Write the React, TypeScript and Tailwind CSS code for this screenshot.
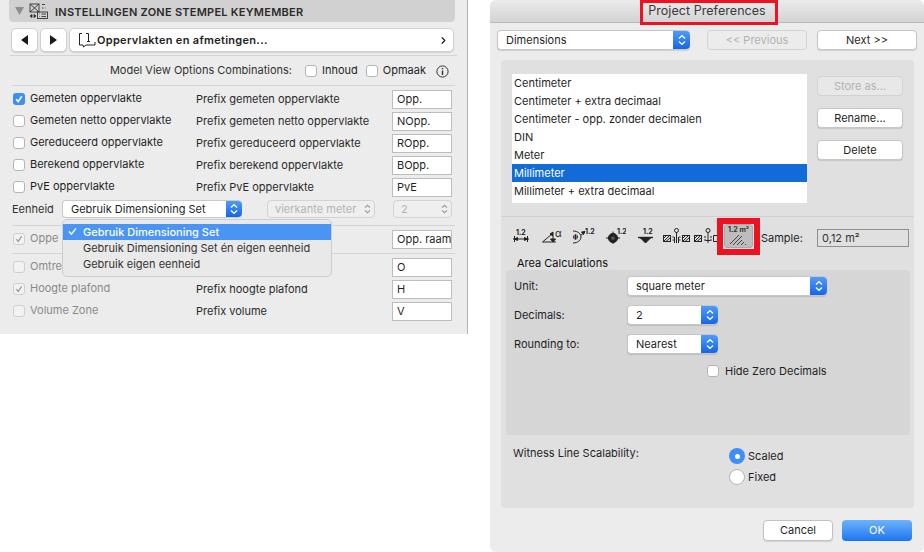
import { ChevronRight } from 'lucide-react';

// Left palette rows
const ROWS_TOP = [
  { label: 'Gemeten oppervlakte', prefix: 'Prefix gemeten oppervlakte', value: 'Opp.', checked: true },
  { label: 'Gemeten netto oppervlakte', prefix: 'Prefix gemeten netto oppervlakte', value: 'NOpp.', checked: false },
  { label: 'Gereduceerd oppervlakte', prefix: 'Prefix gereduceerd oppervlakte', value: 'ROpp.', checked: false },
  { label: 'Berekend oppervlakte', prefix: 'Prefix berekend oppervlakte', value: 'BOpp.', checked: false },
  { label: 'PvE oppervlakte', prefix: 'Prefix PvE oppervlakte', value: 'PvE', checked: false },
];

const LIST_ITEMS = [
  'Centimeter',
  'Centimeter + extra decimaal',
  'Centimeter - opp. zonder decimalen',
  'DIN',
  'Meter',
  'Millimeter',
  'Millimeter + extra decimaal',
];

function Check({ checked = false, dim = false }: { checked?: boolean; dim?: boolean }) {
  if (checked && !dim) {
    return (
      <span className="w-3 h-3 shrink-0 rounded-[3px] bg-[#3d8ef5] flex items-center justify-center">
        <svg width="10" height="10" viewBox="0 0 10 10" fill="none" stroke="#fff" strokeWidth="1.6">
          <path d="M2.2 5.2 L4.2 7.6 L7.8 2.2" />
        </svg>
      </span>
    );
  }
  return (
    <span
      className={`w-3 h-3 shrink-0 rounded-[3px] border flex items-center justify-center ${
        dim ? 'bg-[#f2f2f2] border-[#cfcfcf]' : 'bg-white border-[#b5b5b5]'
      }`}
    >
      {checked && (
        <svg width="10" height="10" viewBox="0 0 10 10" fill="none" stroke="#9a9a9a" strokeWidth="1.2">
          <path d="M2.4 5.2 L4.2 7.4 L7.6 2.4" />
        </svg>
      )}
    </span>
  );
}

function Updown({ color = '#fff', w = 8, h = 12 }: { color?: string; w?: number; h?: number }) {
  return (
    <svg width={w} height={h} viewBox="0 0 8 12" fill="none" stroke={color} strokeWidth="1.4">
      <path d="M1 4.4 L4 1.6 L7 4.4" />
      <path d="M1 7.6 L4 10.4 L7 7.6" />
    </svg>
  );
}

function BlueCap({ className = 'w-4' }: { className?: string }) {
  return (
    <span className={`${className} self-stretch shrink-0 rounded-r-[4px] bg-gradient-to-b from-[#4f9bf8] to-[#1466e6] flex items-center justify-center`}>
      <Updown />
    </span>
  );
}

function PrefixRow({
  label,
  prefix,
  value,
  checked,
  dim,
}: {
  label: string;
  prefix: string;
  value: string;
  checked?: boolean;
  dim?: boolean;
}) {
  return (
    <div className="h-[22px] flex items-center">
      <div className="w-[196px] flex items-center pl-[13px] gap-[5px]">
        <Check checked={checked} dim={dim} />
        <span className={`-mt-[2px] ${dim ? 'text-[#8a8a8a]' : 'text-[#1f1f1f]'}`}>{label}</span>
      </div>
      <span className="flex-1 text-[#2a2a2a]">{prefix}</span>
      <span className="w-[60px] h-[19px] mr-[15px] border border-[#bdbdbd] bg-white pl-[4px] flex items-center text-[#1f1f1f] whitespace-nowrap overflow-hidden">
        {value}
      </span>
    </div>
  );
}

function LeftPanel() {
  return (
    <div className="w-[468px] h-[334px] shrink-0 bg-[#ececec] border-r border-[#b4b4b4] relative text-[11px] font-['Inter',sans-serif]">
      {/* Header */}
      <div className="mx-[9px] w-[446px] h-[22px] bg-[#d1d1d1] rounded-b-[4px] flex items-center pl-[6px]">
        <svg width="9" height="8" viewBox="0 0 9 8" className="mr-[5px]">
          <path d="M0 0 H9 L4.5 8 Z" fill="#8d8d8d" />
        </svg>
        <svg width="19" height="16" viewBox="0 0 19 16" fill="none" stroke="#333" strokeWidth="0.9" className="mr-[7px]">
          <rect x="1" y="1" width="9" height="8" />
          <path d="M1 1 L10 9 M10 1 L1 9" />
          <path d="M13 1.5 H16 M13 5 H14.5 M16.5 5 H17" />
          <rect x="8.5" y="9" width="10" height="6.5" />
          <path d="M10.5 11 H11 M12.5 11 H17 M10.5 13.5 H11 M12.5 13.5 H17" />
          <path d="M1 13 L3 11.5 V14.5 Z M7 13 L5 11.5 V14.5 Z" fill="#333" />
        </svg>
        <span className="pt-[2px] font-semibold text-[11px] text-[#2b2b2b] tracking-[0.25px]">INSTELLINGEN ZONE STEMPEL KEYMEMBER</span>
      </div>

      {/* Nav */}
      <div className="mt-[6px] ml-[11px] h-[24px] flex gap-[2px]">
        <button className="w-[27px] rounded-[5px] bg-white border border-[#cfcfcf] shadow-[0_1px_1px_rgba(0,0,0,0.12)] flex items-center justify-center">
          <svg width="7" height="10" viewBox="0 0 7 10"><path d="M7 0 V10 L0 5 Z" fill="#1a1a1a" /></svg>
        </button>
        <button className="w-[27px] rounded-[5px] bg-white border border-[#cfcfcf] shadow-[0_1px_1px_rgba(0,0,0,0.12)] flex items-center justify-center">
          <svg width="7" height="10" viewBox="0 0 7 10"><path d="M0 0 V10 L7 5 Z" fill="#1a1a1a" /></svg>
        </button>
        <button className="w-[385px] rounded-[5px] bg-white border border-[#cfcfcf] shadow-[0_1px_1px_rgba(0,0,0,0.12)] flex items-center pl-[8px] pr-[4px]">
          <svg width="18" height="16" viewBox="0 0 18 16" fill="none" stroke="#222" strokeWidth="1">
            <path d="M4 1.5 H1.5 V13 H5 L5.5 15 L8 13 H17 V10" />
            <path d="M8 1.5 H10.5 V9.5 M9 9.5 H12" />
          </svg>
          <span className="ml-[1px] font-semibold text-[#222] tracking-[0.3px]">Oppervlakten en afmetingen...</span>
          <ChevronRight size={11} strokeWidth={2.6} className="ml-auto text-[#222]" />
        </button>
      </div>

      <div className="mt-[3px] mx-[10px] border-t border-[#d4d4d4]" />

      {/* Model view */}
      <div className="h-[29px] flex items-center justify-end pr-[41px]">
        <span className="text-[#333] mr-[13px]">Model View Options Combinations:</span>
        <Check />
        <span className="ml-[5px] mr-[8px] text-[#1f1f1f]">Inhoud</span>
        <Check />
        <span className="ml-[5px] text-[#1f1f1f]">Opmaak</span>
      </div>
      <svg width="13" height="13" viewBox="0 0 13 13" fill="none" className="absolute left-[436px] top-[65px]">
        <circle cx="6.5" cy="6.5" r="5.6" stroke="#333" strokeWidth="1" />
        <path d="M6.5 5.6 V10 M6.5 3 V4.2" stroke="#333" strokeWidth="1.4" />
      </svg>
      <div className="mx-[12px] border-t border-[#d4d4d4]" />

      <div className="mt-[2px]">
        {ROWS_TOP.map((r) => (
          <PrefixRow key={r.label} {...r} />
        ))}
      </div>

      {/* Eenheid */}
      <div className="h-[22px] flex items-center pl-[12px] pr-[15px]">
        <span className="w-[50px] text-[#333]">Eenheid</span>
        <span className="w-[180px] h-[18px] rounded-[4px] bg-white border border-[#c9c9c9] border-r-0 flex items-center pl-[8px] text-[#1f1f1f]">
          <span className="flex-1">Gebruik Dimensioning Set</span>
          <BlueCap />
        </span>
        <span className="ml-[25px] w-[108px] h-[18px] rounded-[4px] bg-[#efefef] border border-[#d3d3d3] flex items-center pl-[7px] pr-[3px] text-[#b4b4b4]">
          <span className="flex-1">vierkante meter</span>
          <Updown color="#9a9a9a" w={7} h={10} />
        </span>
        <span className="ml-[18px] w-[59px] h-[18px] rounded-[4px] bg-[#efefef] border border-[#d3d3d3] flex items-center pl-[7px] pr-[3px] text-[#b4b4b4]">
          <span className="flex-1">2</span>
          <Updown color="#9a9a9a" w={7} h={10} />
        </span>
      </div>

      <div className="mt-[5px] mx-[12px] border-t border-[#d4d4d4]" />
      <div className="mt-[2px]">
        {/* labels are cut off by the open popup in the picture */}
        <PrefixRow label="Oppe" prefix="" value="Opp. raam" checked dim />
      </div>
      <div className="mt-[3px] mx-[12px] border-t border-[#d4d4d4]" />
      <div className="mt-[2px]">
        <PrefixRow label="Omtre" prefix="" value="O" dim />
        <PrefixRow label="Hoogte plafond" prefix="Prefix hoogte plafond" value="H" checked dim />
        <PrefixRow label="Volume Zone" prefix="Prefix volume" value="V" dim />
      </div>

      {/* Open popup menu */}
      <div className="absolute left-[62px] top-[219px] w-[270px] h-[58px] rounded-[5px] bg-[#e9e9e9] border border-[#cdcdcd] py-[4px] text-[#333]">
        <div className="h-[16px] bg-[#4a94f4] text-white font-medium flex items-center pl-[20px] relative">
          <svg width="9" height="9" viewBox="0 0 9 9" fill="none" stroke="#fff" strokeWidth="1.5" className="absolute left-[5px] top-[3px]">
            <path d="M1 4.6 L3.4 7.2 L8 1.4" />
          </svg>
          Gebruik Dimensioning Set
        </div>
        <div className="h-[16px] flex items-center pl-[20px]">Gebruik Dimensioning Set én eigen eenheid</div>
        <div className="h-[16px] flex items-center pl-[20px]">Gebruik eigen eenheid</div>
      </div>
    </div>
  );
}

// Small "1.2" value used in the dimension tool icons
function Val({ x, y = 6 }: { x: number; y?: number }) {
  return (
    <text x={x} y={y} fontSize="7" fontWeight="700" fill="#222" stroke="none" letterSpacing="0">
      1.2
    </text>
  );
}

function Hatch({ x }: { x: number }) {
  return (
    <g>
      <rect x={x + 0.5} y="7.5" width="7" height="6" />
      <path d={`M${x + 0.5} 13.5 L${x + 6.5} 7.5 M${x + 3} 13.5 L${x + 7.5} 9.5 M${x + 0.5} 10.5 L${x + 3.5} 7.5`} />
    </g>
  );
}

function DimIcons() {
  const s = { fill: 'none', stroke: '#222', strokeWidth: 1 } as const;
  return (
    <div className="flex -mt-[4px] h-[16px]">
      <svg {...s} width="18" height="16" viewBox="0 0 18 16" className="ml-[11px]">
        <Val x={4} y={7} />
        <path d="M1 11 H17 M2.5 8 V14 M15.5 8 V14" />
        <path d="M2.5 11 L5.5 9.5 V12.5 Z M15.5 11 L12.5 9.5 V12.5 Z" fill="#222" />
      </svg>
      <svg {...s} width="20" height="16" viewBox="0 0 20 16" className="ml-[12px]">
        <path d="M0.5 14 L10 6 M0.5 14 H14" />
        <path d="M11 4 L8 6 L11 8 Z M11 14 L13.5 11 H8.5 Z" fill="#222" />
        <path d="M11 8 V11" />
        <text x="13" y="9" fontSize="10" fill="#222" stroke="none">α</text>
      </svg>
      <svg {...s} width="23" height="16" viewBox="0 0 23 16" className="ml-[10px]">
        <path d="M1 3 C6 3 9 6 9 9 C9 12 6 15 1 15" />
        <circle cx="3.5" cy="9" r="2.2" strokeWidth="0.7" />
        <path d="M1 9 H6 M3.5 6.5 V11.5" />
        <path d="M9 7 L12 5" />
        <path d="M13 3.5 L9.5 4 L11.5 6.5 Z" fill="#222" />
        <Val x={13} />
      </svg>
      <svg {...s} width="21" height="16" viewBox="0 0 21 16" className="ml-[10px]">
        <circle cx="8" cy="10" r="4.6" fill="#222" />
        <circle cx="8" cy="10" r="1.6" fill="#e0e0e0" stroke="none" />
        <path d="M1 10 H15 M8 3.5 V16" />
        <Val x={12} />
      </svg>
      <svg {...s} width="15" height="16" viewBox="0 0 15 16" className="ml-[12px]">
        <Val x={5} />
        <path d="M0 9.5 H15" strokeWidth="1.4" />
        <path d="M2.5 10 H12.5 L7.5 15 Z" fill="#222" />
      </svg>
      <svg {...s} width="27" height="16" viewBox="0 0 27 16" className="ml-[10px]">
        <Hatch x={0} />
        <circle cx="13.5" cy="2.5" r="2" />
        <path d="M13.5 4.5 V15 M9.5 9 H11 M9.5 12 H11 M16 9 H17.5 M16 12 H17.5" />
        <path d="M11.5 9 V15 M15.5 9 V15" strokeWidth="1" />
        <Hatch x={19} />
      </svg>
      <svg {...s} width="24" height="16" viewBox="0 0 24 16" className="ml-[4px]">
        <Hatch x={0} />
        <circle cx="14" cy="2.5" r="2" />
        <path d="M14 4.5 V15 M10 9 H12 M10 12 H12 M16 9 H18 M16 12 H18 M11.5 12.5 H16.5" />
        <path d="M19.5 7.5 H24 M19.5 13.5 H24 M19.5 7.5 V13.5" />
      </svg>
    </div>
  );
}

function ListButton({ children, disabled, className = '' }: { children: string; disabled?: boolean; className?: string }) {
  return (
    <button
      className={`w-[86px] h-[20px] rounded-[4px] border flex items-center justify-center ${
        disabled ? 'bg-[#e8e8e8] border-[#d2d2d2] text-[#b2b2b2]' : 'bg-white border-[#c6c6c6] text-[#1f1f1f] shadow-[0_1px_1px_rgba(0,0,0,0.12)]'
      } ${className}`}
    >
      {children}
    </button>
  );
}

function BlueSelect({ label, widthClass }: { label: string; widthClass: string }) {
  return (
    <span className={`${widthClass} h-[20px] rounded-[4px] bg-white border border-[#c6c6c6] border-r-0 flex items-center pl-[8px] text-[#1f1f1f] shadow-[0_1px_1px_rgba(0,0,0,0.12)]`}>
      <span className="flex-1">{label}</span>
      <BlueCap className="w-[17px]" />
    </span>
  );
}

function RightPanel() {
  return (
    <div className="w-[434px] h-[552px] shrink-0 ml-[22px] bg-[#ececec] rounded-[6px] relative text-[11px] font-['Inter',sans-serif] text-[#1f1f1f]">
      {/* Title bar */}
      <div className="h-[23px] rounded-t-[6px] bg-gradient-to-b from-[#ebebeb] to-[#d3d3d3] border-b border-[#b9b9b9] flex items-center justify-center">
        <span className="text-[12.5px] tracking-[0.05px] text-[#3a3a3a]">Project Preferences</span>
      </div>
      <div className="absolute left-[150px] top-0 w-[138px] h-[25px] border-[3px] border-[#ee1122] pointer-events-none" />

      {/* Top controls */}
      <div className="mt-[7px] ml-[7px] flex">
        <BlueSelect label="Dimensions" widthClass="w-[193px]" />
        <button className="ml-[17px] w-[100px] h-[20px] rounded-[4px] bg-[#ececec] border border-[#d2d2d2] text-[#b2b2b2]">&lt;&lt; Previous</button>
        <button className="ml-[10px] w-[100px] h-[20px] rounded-[4px] bg-white border border-[#c6c6c6] shadow-[0_1px_1px_rgba(0,0,0,0.12)]">Next &gt;&gt;</button>
      </div>

      {/* Main page */}
      <div className="mt-[10px] ml-[11px] w-[413px] h-[448px] rounded-[4px] bg-[#e0e0e0] relative">
        <div className="pt-[14px] pl-[11px] flex">
          <div className="w-[295px] h-[129px] bg-white">
            {LIST_ITEMS.map((item) => (
              <div
                key={item}
                className={`h-[18px] pl-[2px] flex items-center ${item === 'Millimeter' ? 'bg-[#126bd6] text-white' : ''}`}
              >
                {item}
              </div>
            ))}
          </div>
          <div className="ml-[10px] pt-[2px] flex flex-col">
            <ListButton disabled>Store as...</ListButton>
            <ListButton className="mt-[12px]">Rename...</ListButton>
            <ListButton className="mt-[12px]">Delete</ListButton>
          </div>
        </div>

        <div className="mt-[13px] border-t border-[#d0d0d0]" />

        {/* Icon strip */}
        <div className="h-[42px] flex items-center">
          <DimIcons />
          <span className="ml-[6px] -mt-[4px] w-[29px] h-[24px] rounded-[3px] bg-[#bdbdbd] border border-[#a8a8a8] flex flex-col items-center">
            <span className="text-[7px] leading-[9px] font-bold text-[#333]">1.2 m²</span>
            <svg width="20" height="12" viewBox="0 0 20 12" fill="none" stroke="#444" strokeWidth="1">
              <path d="M1 10 L10 1 M4 11 L13 2 M8 11 L13 6 M12 11 L15 8 M16 11 L17 10" />
            </svg>
          </span>
          <span className="ml-[8px] w-[40px]">Sample:</span>
          <span className="ml-[16px] w-[92px] h-[18px] border border-[#8f8f8f] flex items-center pl-[4px] text-[#333]">0,12 m²</span>
        </div>

        <div className="pl-[16px] -mt-[3px] h-[14px] leading-[14px] text-[#111]">Area Calculations</div>

        {/* Area group */}
        <div className="ml-[5px] w-[404px] h-[165px] rounded-[4px] bg-[#d6d6d6] pt-[6px] flex flex-col">
          <div className="h-[20px] flex items-center">
            <span className="ml-[8px] w-[113px]">Unit:</span>
            <BlueSelect label="square meter" widthClass="w-[200px]" />
          </div>
          <div className="mt-[9px] h-[20px] flex items-center">
            <span className="ml-[8px] w-[113px]">Decimals:</span>
            <BlueSelect label="2" widthClass="w-[91px]" />
          </div>
          <div className="mt-[9px] h-[20px] flex items-center">
            <span className="ml-[8px] w-[113px]">Rounding to:</span>
            <BlueSelect label="Nearest" widthClass="w-[91px]" />
          </div>
          <div className="mt-[9px] pl-[201px] flex items-center gap-[6px]">
            <Check />
            <span>Hide Zero Decimals</span>
          </div>
        </div>

        {/* Witness */}
        <div className="mt-[10px] flex">
          <span className="ml-[12px] w-[216px]">Witness Line Scalability:</span>
          <div className="mt-[3px] flex flex-col gap-[5px]">
            <div className="h-4 flex items-center gap-[3px]">
              <span className="w-4 h-4 rounded-full bg-[#3e8ff5] flex items-center justify-center">
                <span className="w-[5px] h-[5px] rounded-full bg-white" />
              </span>
              <span>Scaled</span>
            </div>
            <div className="h-4 flex items-center gap-[3px]">
              <span className="w-4 h-4 rounded-full bg-white border border-[#b5b5b5]" />
              <span>Fixed</span>
            </div>
          </div>
        </div>
      </div>

      <div className="mt-[12px] flex justify-end pr-[12px] gap-[9px]">
        <button className="w-[70px] h-[21px] rounded-[4px] bg-white border border-[#c1c1c1] shadow-[0_1px_1px_rgba(0,0,0,0.12)] text-[#1f1f1f]">Cancel</button>
        <button className="w-[70px] h-[21px] rounded-[4px] bg-gradient-to-b from-[#6cb3fa] to-[#1a74f0] text-white">OK</button>
      </div>
      <div className="absolute left-[227px] top-[218px] w-[43px] h-[37px] border-[6px] border-[#ee1122] pointer-events-none" />
    </div>
  );
}

export default function App() {
  return (
    <div className="w-[924px] h-[552px] bg-white flex overflow-hidden">
      <LeftPanel />
      <RightPanel />
    </div>
  );
}
